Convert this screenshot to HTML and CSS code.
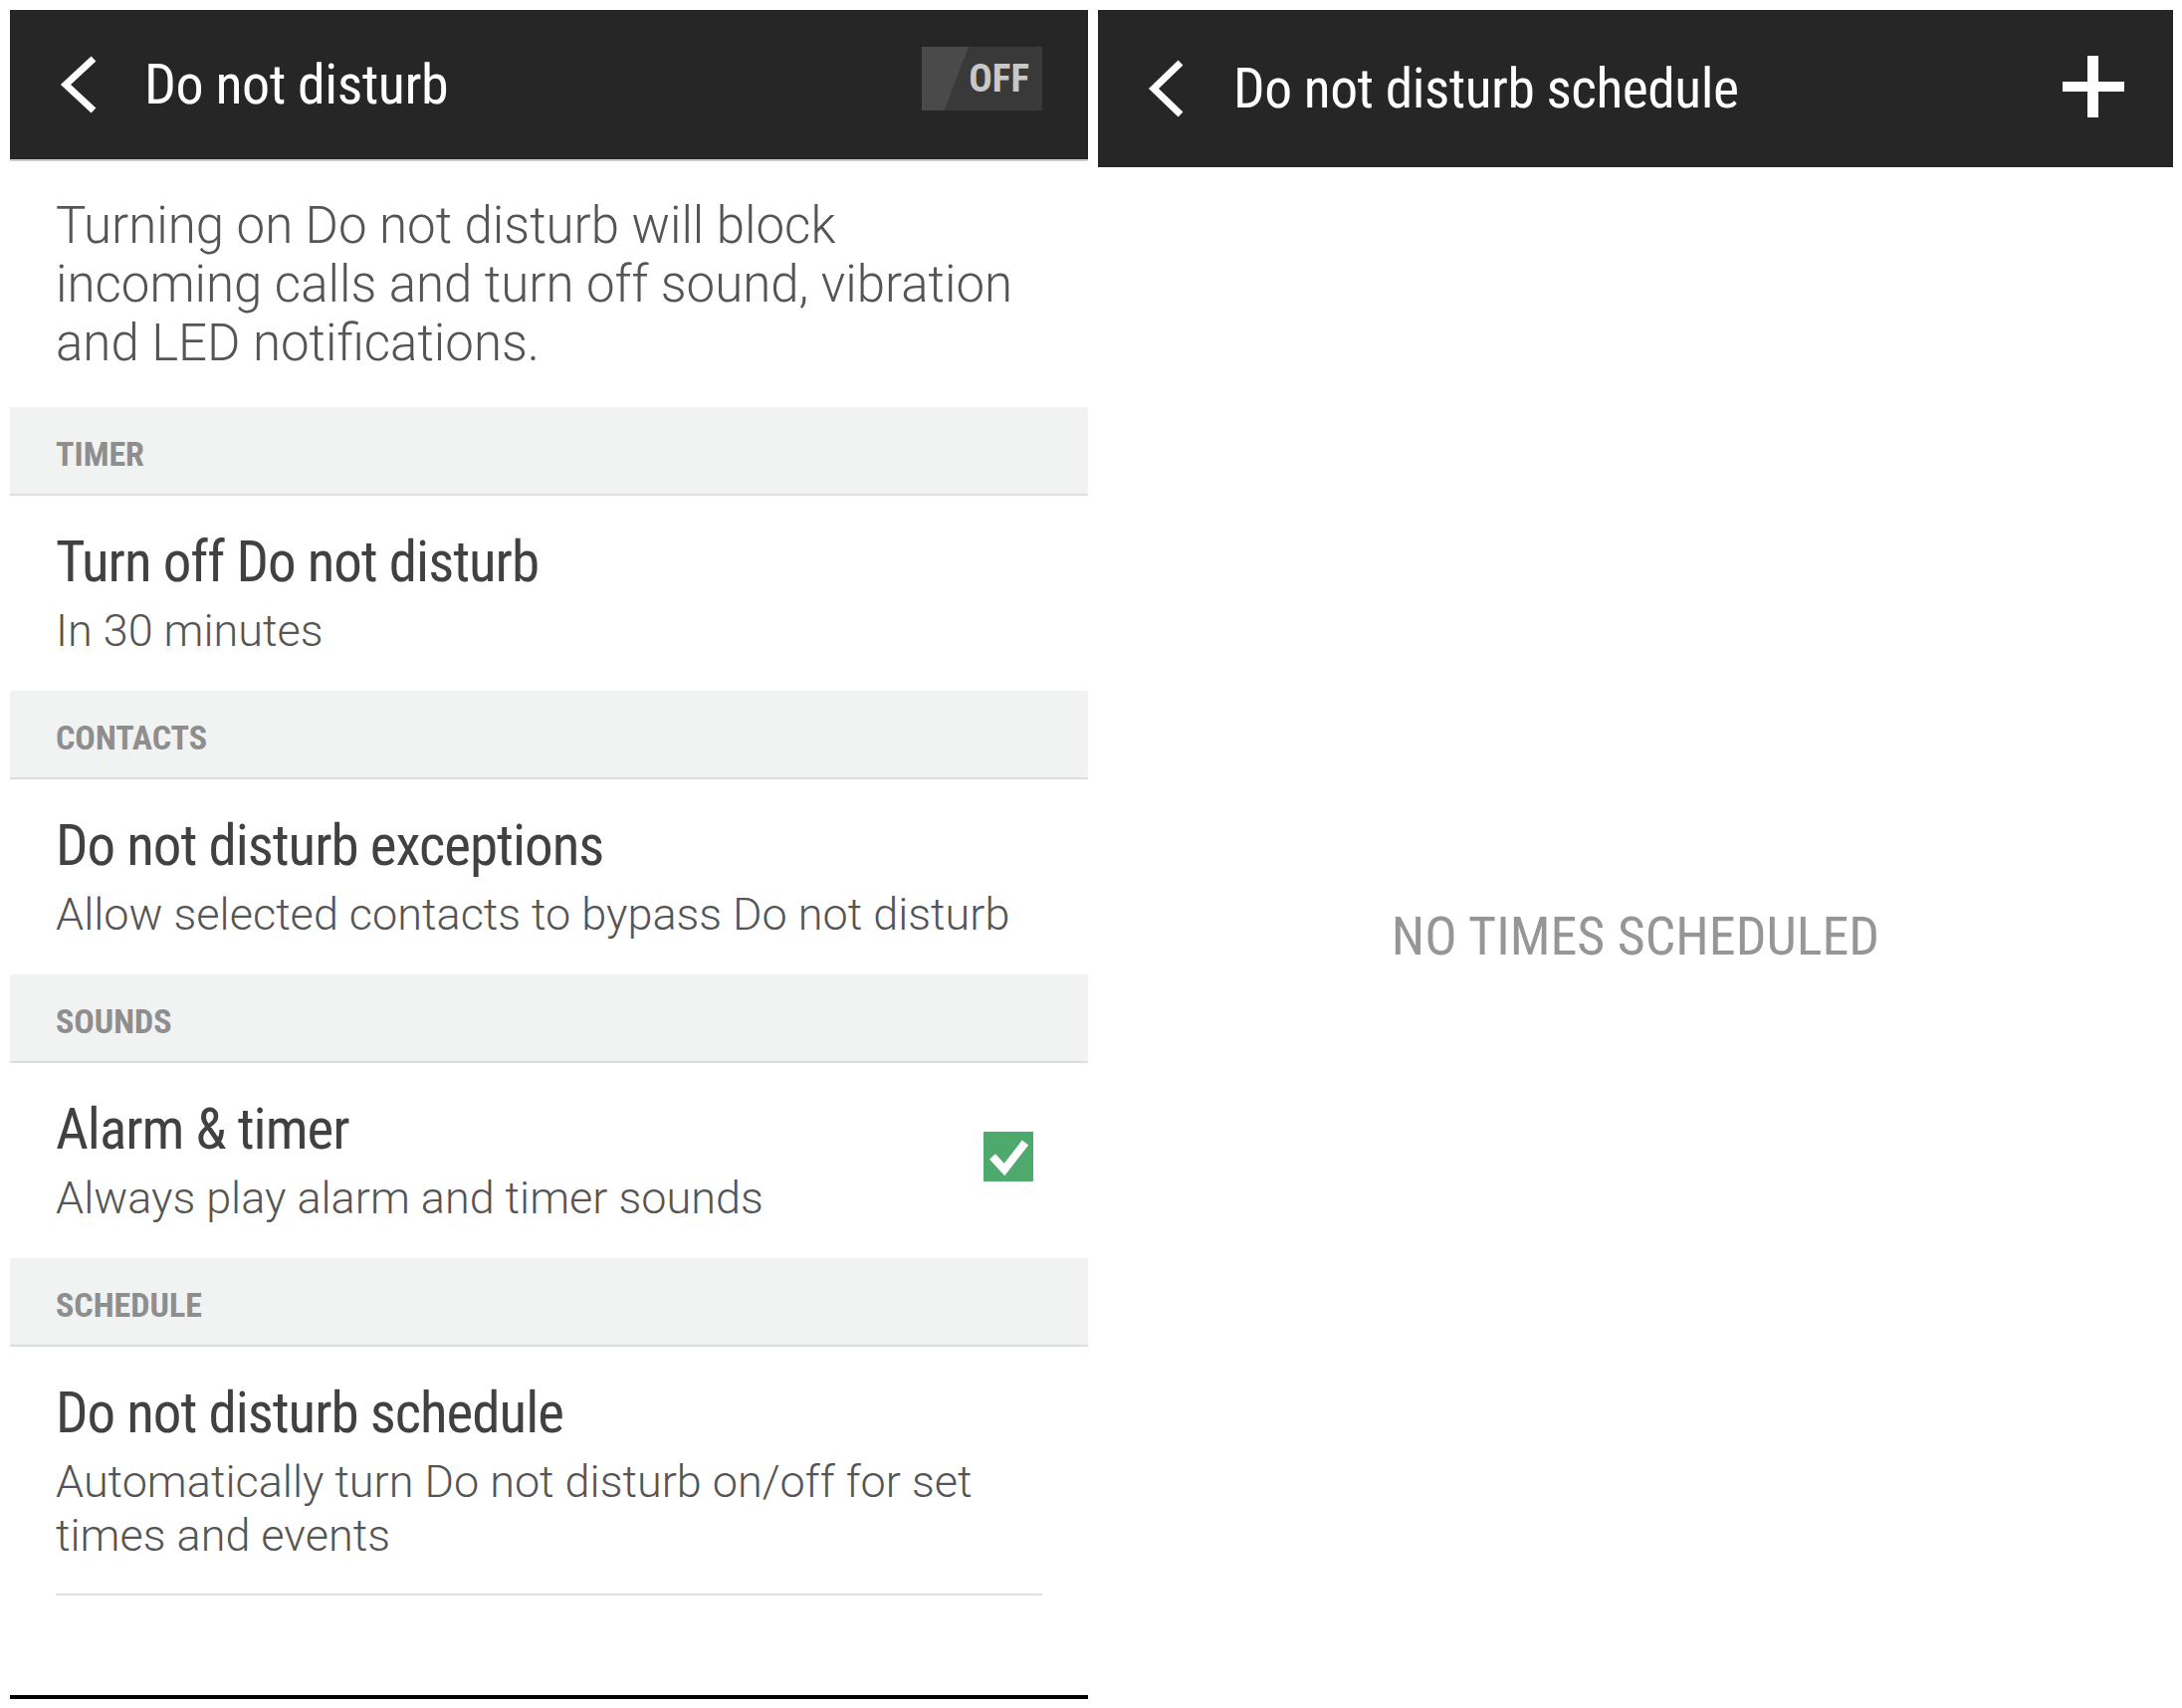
FILE: index.html
```html
<!DOCTYPE html>
<html lang="en">
<head>
  <meta charset="UTF-8">
  <meta name="viewport" content="width=device-width, initial-scale=1.0">
  <title>Do not disturb</title>
  <link rel="stylesheet" href="styles.css">
</head>
<body>
  <div class="screens">

    <section class="screen screen-main">
      <header class="appbar">
        <svg class="back" width="40" height="60" viewBox="0 0 40 60">
          <polyline points="36,4 8,30 36,56" fill="none" stroke="#fff" stroke-width="7"/>
        </svg>
        <h1 class="appbar-title">Do not disturb</h1>
        <div class="toggle"><span class="toggle-label">OFF</span></div>
      </header>

      <p class="intro">Turning on Do not disturb will block<br>incoming calls and turn off sound, vibration<br>and LED notifications.</p>

      <div class="group-label">TIMER</div>
      <div class="item">
        <div class="item-text">
          <div class="item-title">Turn off Do not disturb</div>
          <div class="item-sub">In 30 minutes</div>
        </div>
      </div>

      <div class="group-label">CONTACTS</div>
      <div class="item">
        <div class="item-text">
          <div class="item-title">Do not disturb exceptions</div>
          <div class="item-sub">Allow selected contacts to bypass Do not disturb</div>
        </div>
      </div>

      <div class="group-label">SOUNDS</div>
      <div class="item">
        <div class="item-text">
          <div class="item-title">Alarm &amp; timer</div>
          <div class="item-sub">Always play alarm and timer sounds</div>
        </div>
        <svg class="check" width="50" height="50" viewBox="0 0 50 50">
          <rect width="50" height="50" fill="#4ea96d"/>
          <polyline points="9,25 21,38 42,11" fill="none" stroke="#fff" stroke-width="8"/>
        </svg>
      </div>

      <div class="group-label">SCHEDULE</div>
      <div class="item item-last">
        <div class="item-text">
          <div class="item-title">Do not disturb schedule</div>
          <div class="item-sub">Automatically turn Do not disturb on/off for set<br>times and events</div>
        </div>
      </div>
      <div class="divider"></div>
    </section>

    <section class="screen screen-schedule">
      <header class="appbar appbar-tall">
        <svg class="back" width="40" height="60" viewBox="0 0 40 60">
          <polyline points="35,4 8,30 35,56" fill="none" stroke="#fff" stroke-width="7"/>
        </svg>
        <h1 class="appbar-title">Do not disturb schedule</h1>
        <svg class="add" width="62" height="62" viewBox="0 0 62 62">
          <rect x="25" y="0" width="11" height="62" fill="#fff"/>
          <rect x="0" y="26" width="62" height="10" fill="#fff"/>
        </svg>
      </header>
      <div class="empty">NO TIMES SCHEDULED</div>
    </section>

  </div>
</body>
</html>
```

FILE: styles.css
```css
body {
  margin: 0;
  background: #fff;
  font-family: Roboto, "Noto Sans", sans-serif;
}

.screens {
  display: flex;
  gap: 10px;
  height: 1716px;
  padding: 10px 0 0 10px;
  box-sizing: border-box;
}

.screen {
  display: flex;
  flex-direction: column;
  background: #fff;
}

.screen-main {
  width: 1083px;
  height: 1697px;
  box-sizing: border-box;
  border-bottom: 4px solid #000;
}

.screen-schedule {
  width: 1080px;
}

/* top bar */
.appbar {
  display: flex;
  align-items: center;
  height: 150px;
  flex-shrink: 0;
  background: #262626;
  border-bottom: 2px solid #cdcdcd;
}

.appbar-tall {
  height: 158px;
  border-bottom: none;
}

.back {
  margin-left: 48px;
  flex-shrink: 0;
}

.appbar-title {
  flex: 1;
  margin: 0 0 0 47px;
  font-family: "Roboto Condensed", Roboto, sans-serif;
  font-weight: 400;
  font-size: 56px;
  letter-spacing: -0.5px;
  color: #fff;
}

.appbar-tall .appbar-title {
  margin-left: 48px;
  font-size: 55.5px;
}

.toggle {
  position: relative;
  width: 121px;
  height: 64px;
  margin: 0 46px 12px 0;
  background: #393939;
  display: flex;
  align-items: center;
  justify-content: flex-end;
}

.toggle::before {
  content: "";
  position: absolute;
  left: 0;
  top: 0;
  bottom: 0;
  width: 47px;
  background: #4a4a4a;
  clip-path: polygon(0 0, 100% 0, 48% 100%, 0 100%);
}

.toggle-label {
  position: relative;
  padding-right: 13px;
  font-family: "Roboto Condensed", Roboto, sans-serif;
  font-weight: 700;
  font-size: 39px;
  color: #c8c8c8;
}

.add {
  margin: 0 49px 4px 0;
}

/* main list */
.intro {
  margin: 0;
  padding: 35px 20px 35px 46px;
  font-weight: 300;
  font-size: 51px;
  line-height: 59px;
  color: #555;
  white-space: nowrap;
}

.group-label {
  display: flex;
  align-items: center;
  height: 89px;
  box-sizing: border-box;
  padding: 7px 0 0 46px;
  background: #f1f2f2;
  border-bottom: 2px solid #dddddd;
  font-family: "Roboto Condensed", Roboto, sans-serif;
  font-weight: 700;
  font-size: 34px;
  color: #8e8e8e;
}

.item {
  display: flex;
  align-items: flex-start;
  height: 196px;
  box-sizing: border-box;
  padding: 33px 46px 0;
}

.item-last {
  height: auto;
  padding-bottom: 31px;
}

.item-text {
  flex: 1;
}

.item-title {
  font-family: "Roboto Condensed", Roboto, sans-serif;
  font-weight: 400;
  font-size: 57px;
  line-height: 68px;
  letter-spacing: -1px;
  color: #414141;
}

.item-sub {
  margin-top: 8px;
  font-weight: 300;
  font-size: 45px;
  line-height: 54px;
  color: #555;
  white-space: nowrap;
}

.check {
  margin: 36px 9px 0 0;
  flex-shrink: 0;
}

.divider {
  margin: 0 46px;
  border-top: 2px solid #e1e1e1;
}

/* schedule screen */
.empty {
  flex: 1;
  display: flex;
  align-items: center;
  justify-content: center;
  padding-bottom: 4px;
  font-family: "Roboto Condensed", Roboto, sans-serif;
  font-weight: 400;
  font-size: 54px;
  color: #969696;
}
```
